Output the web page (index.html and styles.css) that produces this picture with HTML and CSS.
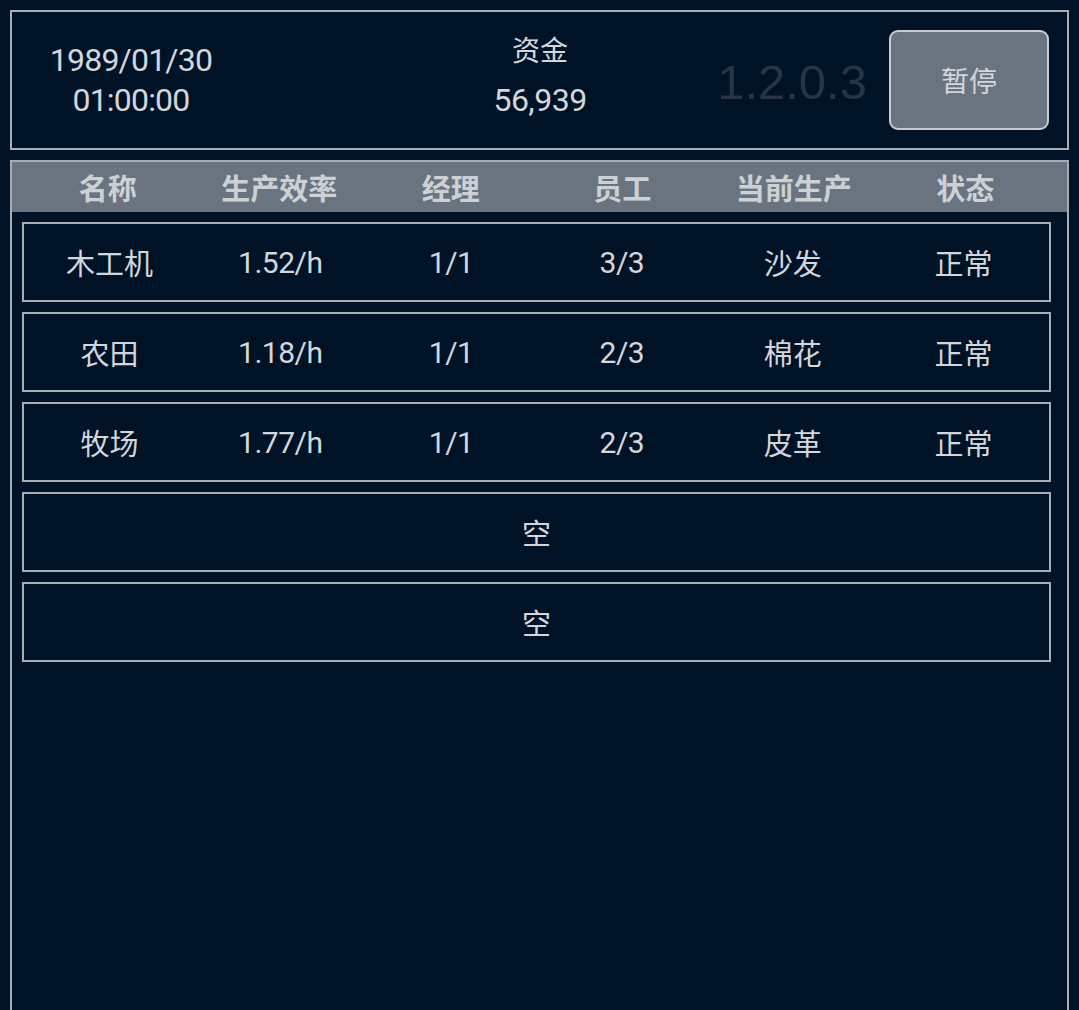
FILE: index.html
```html
<!DOCTYPE html>
<html lang="zh-CN">
<head>
<meta charset="utf-8">
<title>工厂</title>
<link rel="stylesheet" href="styles.css">
</head>
<body>
<div class="topbar">
  <div class="clock">
    <div>1989/01/30</div>
    <div>01:00:00</div>
  </div>
  <div class="funds">
    <div class="funds-label">资金</div>
    <div class="funds-value">56,939</div>
  </div>
  <div class="version">1.2.0.3</div>
  <button class="pause">暂停</button>
</div>
<div class="panel">
  <div class="head">
    <div>名称</div><div>生产效率</div><div>经理</div><div>员工</div><div>当前生产</div><div>状态</div>
  </div>
  <div class="rows">
    <div class="row"><div class="cjk">木工机</div><div>1.52/h</div><div>1/1</div><div>3/3</div><div class="cjk">沙发</div><div class="cjk">正常</div></div>
    <div class="row"><div class="cjk">农田</div><div>1.18/h</div><div>1/1</div><div>2/3</div><div class="cjk">棉花</div><div class="cjk">正常</div></div>
    <div class="row"><div class="cjk">牧场</div><div>1.77/h</div><div>1/1</div><div>2/3</div><div class="cjk">皮革</div><div class="cjk">正常</div></div>
    <div class="row empty"><div class="cjk">空</div></div>
    <div class="row empty"><div class="cjk">空</div></div>
  </div>
</div>
</body>
</html>
```
FILE: styles.css
```css
html, body {
  margin: 0;
  padding: 0;
  background: #001326;
  overflow: hidden;
}
body {
  padding: 10px;
  font-family: Roboto, "Noto Sans CJK SC", sans-serif;
  color: #d3d6da;
}
.topbar {
  height: 136px;
  border: 2px solid #a8adb3;
  display: flex;
  align-items: center;
}
.clock {
  width: 238px;
  text-align: center;
  font-size: 32px;
  line-height: 40px;
  letter-spacing: -0.8px;
  margin-top: 0;
}
.funds {
  width: 340px;
  margin-left: 120px;
  text-align: center;
}
.funds-label {
  font-family: "Noto Sans CJK SC", sans-serif;
  font-size: 28px;
  line-height: 40px;
}
.funds-value {
  font-size: 32px;
  line-height: 62px;
  letter-spacing: -0.5px;
}
.version {
  flex: 1;
  text-align: right;
  font-family: "Liberation Sans", Arial, sans-serif;
  font-size: 49px;
  color: #283443;
  padding-right: 22px;
  margin-top: 4px;
}
.pause {
  width: 160px;
  height: 100px;
  margin-right: 18px;
  background: #6a7480;
  border: 2px solid #c9cdd1;
  border-radius: 9px;
  color: #d3d6da;
  font-family: "Noto Sans CJK SC", sans-serif;
  font-size: 28px;
  padding: 0;
}
.panel {
  margin-top: 10px;
  height: 900px;
  border: 2px solid #a8adb3;
}
.head, .row {
  display: grid;
  grid-template-columns: repeat(6, 1fr);
  align-items: center;
  text-align: center;
}
.head {
  height: 50px;
  background: #6a7480;
  color: #cdd1d5;
  font-family: "Noto Sans CJK SC", sans-serif;
  font-weight: 700;
  font-size: 29px;
  padding: 0 16px 0 10px;
}
.rows {
  padding: 10px 16px 0 10px;
  display: flex;
  flex-direction: column;
  gap: 10px;
}
.row {
  height: 76px;
  border: 2px solid #a8adb3;
  font-size: 30px;
  letter-spacing: -0.5px;
}
.row .cjk {
  font-family: "Noto Sans CJK SC", sans-serif;
  font-size: 29px;
  letter-spacing: 0;
}
.row.empty {
  grid-template-columns: 1fr;
}
```
